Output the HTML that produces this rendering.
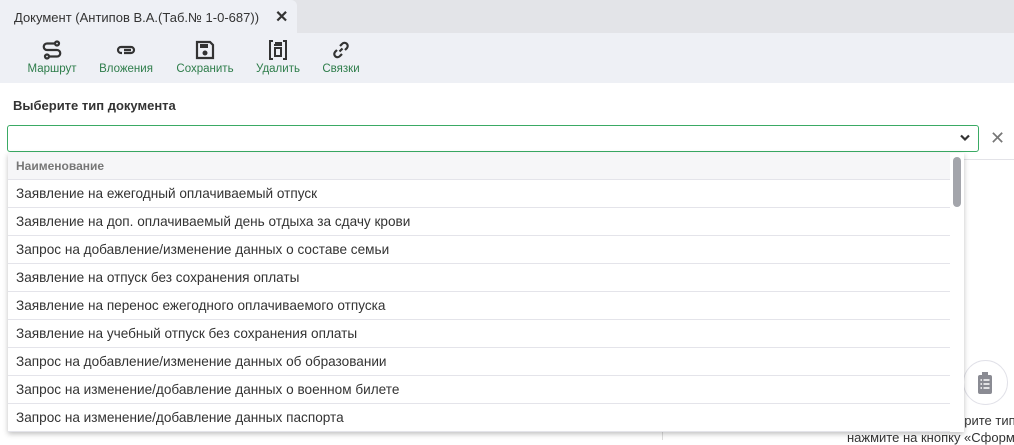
<!DOCTYPE html>
<html><head><meta charset="utf-8"><style>
*{box-sizing:border-box;margin:0;padding:0}
body{width:1014px;height:440px;overflow:hidden;background:#fff;font-family:"Liberation Sans",sans-serif;position:relative;color:#333}
.topbar{position:absolute;left:0;top:0;width:1014px;height:33px;background:#e3e4e8}
.tab{position:absolute;left:0;top:0;width:297px;height:33px;background:#eef0f5;border-radius:0 6px 0 0;font-size:13px;color:#333;padding:10px 0 0 14px;white-space:nowrap}
.tab .x{position:absolute;left:275px;top:7px;font-size:16px;font-weight:bold;color:#333}
.toolbar{position:absolute;left:0;top:33px;width:1014px;height:50px;background:#eef0f5}
.btn{position:absolute;top:0;text-align:center;font-size:11.5px;color:#2e7d4a}
.btn svg{display:block;margin:7px auto 3px}
.title{position:absolute;left:13px;top:98px;font-size:13px;font-weight:bold;color:#333}
.input{position:absolute;left:7px;top:125px;width:972px;height:27px;border:1px solid #3aaa64;border-radius:3px}
.chev{position:absolute;left:959px;top:133px}
.clr{position:absolute;left:990px;top:128px;font-size:18px;color:#777;font-weight:normal}
.hline{position:absolute;left:964px;top:159px;width:50px;height:1px;background:#e3e3e8}
.vline{position:absolute;left:662px;top:432px;width:1px;height:8px;background:#ddd}
.dd{position:absolute;left:8px;top:153px;width:956px;height:279px;background:#fff;box-shadow:0 2px 5px rgba(0,0,0,.25);overflow:hidden}
.row{height:28px;border-bottom:1px solid #e4e4ea;width:942px;font-size:13.6px;line-height:27px;padding-left:8px;color:#333;white-space:nowrap}
.hd{background:#f6f6f8;height:27px;font-size:12px;font-weight:bold;color:#777;line-height:27px}
.sb{position:absolute;left:945px;top:4px;width:8px;height:50px;background:#a3a5ab;border-radius:4px}
.circ{position:absolute;left:963px;top:360px;width:45px;height:45px;border:1px solid #e1e1e8;border-radius:50%;background:#fff}
.bt{position:absolute;font-size:13px;color:#333;white-space:nowrap}
</style></head><body>
<div class="topbar"></div>
<div class="tab">Документ (Антипов В.А.(Таб.№ 1-0-687))<span class="x">✕</span></div>
<div class="toolbar">
 <div class="btn" style="left:25px;width:54px"><svg width="20" height="20" viewBox="0 0 20 20" fill="none" stroke="#333" stroke-width="2.2"><circle cx="15" cy="3.5" r="2"/><circle cx="5" cy="16.5" r="2"/><path d="M13 3.5H5a3.2 3.2 0 0 0 0 6.5h10a3.2 3.2 0 0 1 0 6.5H7"/></svg>Маршрут</div>
 <div class="btn" style="left:97px;width:58px"><svg width="20" height="20" viewBox="0 0 20 20" fill="none" stroke="#333" stroke-width="2.2"><path d="M8 13h7a3 3 0 0 0 0-6H5a3 3 0 0 0 0 6h1M8 10h7"/></svg>Вложения</div>
 <div class="btn" style="left:174px;width:62px"><svg width="20" height="20" viewBox="0 0 20 20"><path d="M2 2h13l3 3v13H2z" fill="none" stroke="#333" stroke-width="2.2"/><rect x="5" y="4" width="8" height="4" fill="#333"/><circle cx="10" cy="13" r="2.5" fill="#333"/></svg>Сохранить</div>
 <div class="btn" style="left:254px;width:48px"><svg width="20" height="20" viewBox="0 0 20 20" fill="none" stroke="#333" stroke-width="2"><path d="M5 1H2v18h3M15 1h3v18h-3"/><path d="M7 3h6v2M6 5h8M7 8h6v8H7z"/></svg>Удалить</div>
 <div class="btn" style="left:320px;width:42px"><svg width="20" height="20" viewBox="0 0 20 20" fill="none" stroke="#333" stroke-width="2.2"><path d="M8.5 11.5l3-3M9 6l2-2a3 3 0 0 1 5 4l-2 2M11 14l-2 2a3 3 0 0 1-5-4l2-2"/></svg>Связки</div>
</div>
<div class="title">Выберите тип документа</div>
<div class="input"></div>
<svg class="chev" width="12" height="10" viewBox="0 0 12 10"><path d="M2 2.5l4 4 4-4" fill="none" stroke="#333" stroke-width="2.2"/></svg>
<div class="clr">✕</div>
<div class="hline"></div>
<div class="circ"><svg width="45" height="45" viewBox="0 0 45 45"><rect x="14" y="14" width="14" height="19" rx="2" fill="#8a8b93"/><rect x="18" y="11" width="6" height="4" fill="#8a8b93"/><g stroke="#fff" stroke-width="1.5"><path d="M16.5 19h1.5M19.5 19h6M16.5 23h1.5M19.5 23h6M16.5 27h1.5M19.5 27h6"/></g></svg></div>
<div class="bt" style="left:957px;top:413px">ерите тип</div>
<div class="bt" style="left:847px;top:430px">нажмите на кнопку «Сформи</div>
<div class="vline"></div>
<div class="dd">
 <div class="row hd">Наименование</div>
 <div class="row">Заявление на ежегодный оплачиваемый отпуск</div>
 <div class="row">Заявление на доп. оплачиваемый день отдыха за сдачу крови</div>
 <div class="row">Запрос на добавление/изменение данных о составе семьи</div>
 <div class="row">Заявление на отпуск без сохранения оплаты</div>
 <div class="row">Заявление на перенос ежегодного оплачиваемого отпуска</div>
 <div class="row">Заявление на учебный отпуск без сохранения оплаты</div>
 <div class="row">Запрос на добавление/изменение данных об образовании</div>
 <div class="row">Запрос на изменение/добавление данных о военном билете</div>
 <div class="row">Запрос на изменение/добавление данных паспорта</div>
 <div class="sb"></div>
</div>
</body></html>
